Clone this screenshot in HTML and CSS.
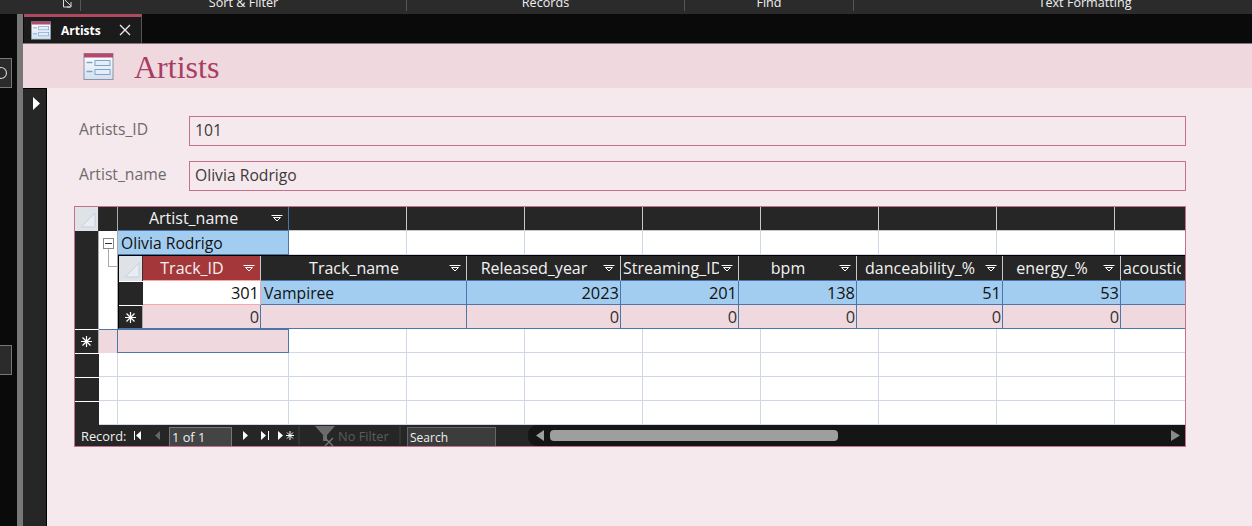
FILE: index.html
```html
<!DOCTYPE html>
<html>
<head>
    <title>Artists</title>
    <link rel="stylesheet" href="styles.css">
</head>
<body>
    <svg class="defs" width="0" height="0">
        <defs>
            <linearGradient id="form-fill" x1="0" y1="0" x2="0" y2="1">
                <stop offset="0" stop-color="#ffffff"/>
                <stop offset="1" stop-color="#d3e0f0"/>
            </linearGradient>
        </defs>
        <symbol id="drop" viewBox="0 0 12 8">
            <path d="M0.5 1.5H11.5M2.5 3.5H9.5L6 7Z" fill="none" stroke="#fff" stroke-width="1"/>
        </symbol>
        <symbol id="corner" viewBox="0 0 16 16">
            <path d="M1 15L15 1V15Z" fill="#e9edf3" stroke="#c6d0de" stroke-width="1"/>
        </symbol>
        <symbol id="star" viewBox="0 0 11 11">
            <path d="M5.5 0V11M0 5.5H11M1.5 1.5L9.5 9.5M9.5 1.5L1.5 9.5" stroke="#fff" stroke-width="1.2"/>
        </symbol>
        <symbol id="form-icon" viewBox="0 0 30 27">
            <rect x="0.5" y="0.5" width="29" height="26" fill="url(#form-fill)" stroke="#8b95a5"/>
            <rect x="0.5" y="0.5" width="29" height="4" fill="#b5486c"/>
            <path d="M3 9.5H9M3 18.5H9" stroke="#7fa3cc" stroke-width="1.4"/>
            <rect x="11.5" y="7.5" width="15" height="5" fill="#e4eef9" stroke="#7fa3cc"/>
            <rect x="11.5" y="16.5" width="15" height="5" fill="#e4eef9" stroke="#7fa3cc"/>
        </symbol>
    </svg>

    <div class="ribbon">
        <div class="ribbon-group launcher-group">
            <svg class="launcher" width="12" height="10" viewBox="0 0 12 10">
                <path d="M1 0H1.5V7H8M3 0L9 6M9 2V7H5" fill="none" stroke="#ddd" stroke-width="1"/>
            </svg>
        </div>
        <div class="ribbon-group sort-group"><span>Sort &amp; Filter</span></div>
        <div class="ribbon-group records-group"><span>Records</span></div>
        <div class="ribbon-group find-group"><span>Find</span></div>
        <div class="ribbon-group format-group"><span>Text Formatting</span></div>
    </div>

    <div class="workspace">
        <div class="nav-pane">
            <div class="nav-box nav-box-top">
                <svg width="11" height="16" viewBox="0 0 11 16">
                    <circle cx="1" cy="8" r="5.5" fill="none" stroke="#ccc" stroke-width="1.2"/>
                </svg>
            </div>
            <div class="nav-box nav-box-bottom"></div>
        </div>
        <div class="splitter"></div>

        <div class="document">
            <div class="tab-bar">
                <div class="tab">
                    <svg class="tab-icon" width="20" height="19"><use href="#form-icon"/></svg>
                    <span class="tab-name">Artists</span>
                    <svg class="tab-close" width="12" height="12" viewBox="0 0 12 12">
                        <path d="M1 1L11 11M11 1L1 11" stroke="#eee" stroke-width="1.3"/>
                    </svg>
                </div>
            </div>

            <div class="form-header">
                <svg class="form-header-icon" width="31" height="27"><use href="#form-icon"/></svg>
                <h1 class="form-title">Artists</h1>
            </div>

            <div class="form-body">
                <div class="record-selector">
                    <svg width="7" height="13" viewBox="0 0 7 13"><path d="M0 0L7 6.5L0 13Z" fill="#fff"/></svg>
                </div>

                <div class="form-content">
                    <div class="field">
                        <label class="field-label">Artists_ID</label>
                        <div class="field-value">101</div>
                    </div>
                    <div class="field">
                        <label class="field-label">Artist_name</label>
                        <div class="field-value">Olivia Rodrigo</div>
                    </div>

                    <div class="datasheet">
                        <div class="main-grid">
                            <div class="corner"><svg width="16" height="16"><use href="#corner"/></svg></div>
                            <div class="sel"></div>
                            <div class="head head-main">
                                <span class="head-label">Artist_name</span>
                                <svg class="drop" width="12" height="8"><use href="#drop"/></svg>
                            </div>
                            <div class="head"></div><div class="head"></div><div class="head"></div>
                            <div class="head"></div><div class="head"></div><div class="head"></div>
                            <div class="head"></div><div class="head"></div>

                            <div class="sel"></div>
                            <div class="expander">
                                <div class="minus"></div>
                                <div class="stem"></div>
                            </div>
                            <div class="cell cell-blue">Olivia Rodrigo</div>
                            <div class="empty"></div><div class="empty"></div><div class="empty"></div>
                            <div class="empty"></div><div class="empty"></div><div class="empty"></div>
                            <div class="empty"></div><div class="empty"></div>

                            <div class="sel sub-row"></div>
                            <div class="expander sub-row"><div class="elbow"></div></div>
                            <div class="sub-grid">
                                <div class="corner"><svg width="16" height="16"><use href="#corner"/></svg></div>
                                <div class="head head-active">
                                    <span class="head-label">Track_ID</span>
                                    <svg class="drop" width="12" height="8"><use href="#drop"/></svg>
                                </div>
                                <div class="head head-sub">
                                    <span class="head-label">Track_name</span>
                                    <svg class="drop" width="12" height="8"><use href="#drop"/></svg>
                                </div>
                                <div class="head head-sub">
                                    <span class="head-label">Released_year</span>
                                    <svg class="drop" width="12" height="8"><use href="#drop"/></svg>
                                </div>
                                <div class="head head-sub">
                                    <span class="head-label head-clip">Streaming_ID</span>
                                    <svg class="drop" width="12" height="8"><use href="#drop"/></svg>
                                </div>
                                <div class="head head-sub">
                                    <span class="head-label">bpm</span>
                                    <svg class="drop" width="12" height="8"><use href="#drop"/></svg>
                                </div>
                                <div class="head head-sub">
                                    <span class="head-label">danceability_%</span>
                                    <svg class="drop" width="12" height="8"><use href="#drop"/></svg>
                                </div>
                                <div class="head head-sub">
                                    <span class="head-label">energy_%</span>
                                    <svg class="drop" width="12" height="8"><use href="#drop"/></svg>
                                </div>
                                <div class="head head-sub">
                                    <span class="head-label head-clip">acousticness_%</span>
                                </div>

                                <div class="sel sel-line"></div>
                                <div class="cell cell-num cell-current">301</div>
                                <div class="cell cell-blue">Vampiree</div>
                                <div class="cell cell-blue cell-num">2023</div>
                                <div class="cell cell-blue cell-num">201</div>
                                <div class="cell cell-blue cell-num">138</div>
                                <div class="cell cell-blue cell-num">51</div>
                                <div class="cell cell-blue cell-num">53</div>
                                <div class="cell cell-blue"></div>

                                <div class="sel sel-new"><svg width="11" height="11"><use href="#star"/></svg></div>
                                <div class="cell cell-pink cell-num">0</div>
                                <div class="cell cell-pink"></div>
                                <div class="cell cell-pink cell-num">0</div>
                                <div class="cell cell-pink cell-num">0</div>
                                <div class="cell cell-pink cell-num">0</div>
                                <div class="cell cell-pink cell-num">0</div>
                                <div class="cell cell-pink cell-num">0</div>
                                <div class="cell cell-pink"></div>
                            </div>

                            <div class="sel sel-new"><svg width="11" height="11"><use href="#star"/></svg></div>
                            <div class="pink-gutter"></div>
                            <div class="cell cell-pink cell-new"></div>
                            <div class="empty"></div><div class="empty"></div><div class="empty"></div>
                            <div class="empty"></div><div class="empty"></div><div class="empty"></div>
                            <div class="empty"></div><div class="empty"></div>

                            <div class="sel sel-line"></div><div class="gutter"></div><div class="empty"></div>
                            <div class="empty"></div><div class="empty"></div><div class="empty"></div>
                            <div class="empty"></div><div class="empty"></div><div class="empty"></div>
                            <div class="empty"></div><div class="empty"></div>

                            <div class="sel sel-line"></div><div class="gutter"></div><div class="empty"></div>
                            <div class="empty"></div><div class="empty"></div><div class="empty"></div>
                            <div class="empty"></div><div class="empty"></div><div class="empty"></div>
                            <div class="empty"></div><div class="empty"></div>

                            <div class="sel sel-line"></div><div class="gutter"></div><div class="empty"></div>
                            <div class="empty"></div><div class="empty"></div><div class="empty"></div>
                            <div class="empty"></div><div class="empty"></div><div class="empty"></div>
                            <div class="empty"></div><div class="empty"></div>
                        </div>

                        <div class="record-nav">
                            <span class="nav-label">Record:</span>
                            <svg class="nav-first" width="10" height="9" viewBox="0 0 10 9"><path d="M0.5 0V9" stroke="#fff"/><path d="M7 0V9L2 4.5Z" fill="#fff"/></svg>
                            <svg class="nav-prev" width="6" height="9" viewBox="0 0 6 9"><path d="M5 0V9L0 4.5Z" fill="#666"/></svg>
                            <div class="nav-input">1 of 1</div>
                            <svg class="nav-next" width="6" height="9" viewBox="0 0 6 9"><path d="M0 0V9L5 4.5Z" fill="#fff"/></svg>
                            <svg class="nav-last" width="9" height="9" viewBox="0 0 9 9"><path d="M0 0V9L5 4.5Z" fill="#fff"/><path d="M7.5 0V9" stroke="#fff"/></svg>
                            <svg class="nav-new" width="17" height="9" viewBox="0 0 17 9"><path d="M0 0V9L5 4.5Z" fill="#fff"/><path d="M12 0V9M8 4.5H16M9 1.5L15 7.5M15 1.5L9 7.5" stroke="#fff"/></svg>
                            <div class="nav-sep"></div>
                            <svg class="nav-filter" width="21" height="20" viewBox="0 0 21 20">
                                <path d="M0 0H20L12 9V15H8V9Z" fill="#6b6b6b"/>
                                <path d="M10 12L18 20M18 12L10 20" stroke="#777" stroke-width="1.4"/>
                            </svg>
                            <span class="nav-nofilter">No Filter</span>
                            <div class="nav-sep nav-sep-second"></div>
                            <div class="nav-search">Search</div>
                            <div class="scrollbar">
                                <svg class="scroll-left" width="8" height="11" viewBox="0 0 8 11"><path d="M8 0V11L0 5.5Z" fill="#9e9e9e"/></svg>
                                <div class="scroll-thumb"></div>
                                <svg class="scroll-right" width="9" height="11" viewBox="0 0 9 11"><path d="M0 0V11L9 5.5Z" fill="#8a8a8a"/></svg>
                            </div>
                        </div>
                    </div>
                </div>
            </div>
        </div>
    </div>
</body>
</html>
```

FILE: styles.css
```css
* {
    box-sizing: border-box;
}

html, body {
    margin: 0;
    height: 526px;
    overflow: hidden;
}

body {
    font-family: "Open Sans", "Noto Sans", sans-serif;
    font-size: 15.7px;
    background-color: #0a0a0a;
    display: flex;
    flex-direction: column;
}

.defs {
    position: absolute;
}

/* ribbon, cut off at the top of the window */
.ribbon {
    height: 14px;
    flex: none;
    background-color: #2b2b2b;
    display: flex;
    overflow: hidden;
}

.ribbon-group {
    flex: none;
    height: 11px;
    border-right: 1px solid #555;
    color: #f0f0f0;
    font-size: 12.6px;
    line-height: 11px;
    display: flex;
    align-items: flex-end;
    justify-content: center;
}

.ribbon-group span {
    position: relative;
    top: -3px;
}

.launcher-group {
    width: 81px;
    padding-left: 56px;
    align-items: flex-start;
}

.sort-group {
    width: 326px;
}

.records-group {
    width: 278px;
}

.find-group {
    width: 169px;
}

.format-group {
    width: 462px;
    border-right: none;
}

.workspace {
    flex: 1;
    display: flex;
    min-height: 0;
}

.nav-pane {
    width: 17px;
    flex: none;
}

.nav-box {
    width: 12px;
    height: 30px;
    border: 1px solid #777;
    border-left: none;
    background-color: #2b2b2b;
    display: flex;
    align-items: center;
}

.nav-box-top {
    margin-top: 44px;
}

.nav-box-bottom {
    margin-top: 257px;
}

.splitter {
    width: 6px;
    flex: none;
    background-color: #777;
}

.document {
    flex: 1;
    display: flex;
    flex-direction: column;
    min-width: 0;
}

.tab-bar {
    height: 30px;
    flex: none;
    background-color: #0a0a0a;
    border-bottom: 1px solid #7a7a7a;
}

.tab {
    width: 118px;
    height: 29px;
    margin-left: 1px;
    background-color: #1b1b1b;
    border-top: 3px solid #b0485f;
    border-right: 1px solid #555;
    display: flex;
    align-items: center;
    padding-left: 7px;
}

.tab-icon {
    flex: none;
}

.tab-name {
    margin-left: 10px;
    color: #fff;
    font-size: 12px;
    font-weight: 700;
}

.tab-close {
    margin-left: 18px;
}

.form-header {
    height: 44px;
    flex: none;
    background-color: #efd9df;
    display: flex;
    align-items: center;
    padding-left: 60px;
}

.form-title {
    margin: 0 0 0 20px;
    padding-top: 3px;
    font-family: "Liberation Serif", serif;
    font-weight: 400;
    font-size: 32px;
    color: #a83d62;
}

.form-body {
    flex: 1;
    display: flex;
    background-color: #f6e9ed;
    min-height: 0;
}

.record-selector {
    width: 24px;
    flex: none;
    background-color: #262626;
    border-top: 1px solid #000;
    border-right: 1px solid #000;
    padding: 4px 0 0 10px;
}

.form-content {
    flex: 1;
    min-width: 0;
    padding: 28px 66px 0 27px;
}

.field {
    display: flex;
    align-items: center;
    height: 30px;
    margin-bottom: 15px;
}

.field-label {
    width: 115px;
    padding-left: 5px;
    padding-bottom: 5px;
    color: #6f6a6c;
}

.field-value {
    flex: 1;
    height: 30px;
    line-height: 27px;
    padding-left: 5px;
    border: 1px solid #c4708f;
    color: #3a3a3a;
}

/* datasheet */
.datasheet {
    border: 1px solid #c4708f;
    height: 241px;
    background-color: #fff;
    display: flex;
    flex-direction: column;
    overflow: hidden;
}

.main-grid {
    flex: 1;
    display: grid;
    grid-template-columns: 24px 19px 171px repeat(7, 118px) 71px;
    grid-template-rows: 24px 24px 74px 24px 24px 24px 24px;
    overflow: hidden;
}

.sub-grid {
    grid-column: 3 / -1;
    display: grid;
    grid-template-columns: 24px 118px 206px 154px 118px 118px 146px 118px 66px;
    grid-template-rows: 25px 24px 24px;
    border-top: 1px solid #000;
    border-left: 1px solid #000;
    border-bottom: 1px solid #4a76a8;
    overflow: hidden;
    background-color: #fff;
}

.corner {
    background-color: #dfe3e8;
    border-right: 1px solid #333;
    display: flex;
    align-items: flex-end;
    justify-content: flex-end;
    padding: 0 2px 3px 0;
}

.sel {
    background-color: #262626;
    border-right: 1px solid #aaa;
}

.sel-line {
    border-top: 1px solid #fff;
    border-right: none;
}

.sel-new {
    background-color: #262626;
    border-top: 1px solid #fff;
    display: flex;
    align-items: center;
    justify-content: center;
}

.head {
    background-color: #262626;
    border-right: 1px solid #c8c8c8;
    border-bottom: 1px solid #c8c8c8;
    color: #f2f2f2;
    font-size: 16px;
    display: flex;
    align-items: center;
    padding-right: 5px;
    padding-bottom: 1px;
    min-width: 0;
    overflow: hidden;
}

.head-main {
    border-right-color: #4a76a8;
    border-bottom-color: #4a76a8;
}

.head-sub {
    border-bottom-color: #4a76a8;
}

.head-active {
    background-color: #a4373a;
    border-bottom-color: #f5a9a9;
}

.head-label {
    flex: 1;
    text-align: center;
    white-space: nowrap;
    overflow: hidden;
}

.head-clip {
    text-align: left;
    padding-left: 2px;
}

.drop {
    flex: none;
    margin-left: 2px;
}

.expander {
    background-color: #fff;
    border-right: 1px solid #aaa;
    padding: 7px 0 0 4px;
}

.minus {
    width: 11px;
    height: 11px;
    border: 1px solid #888;
    background: linear-gradient(#333, #333) center / 7px 1px no-repeat;
}

.stem {
    width: 1px;
    height: 6px;
    margin-left: 5px;
    background-color: #aaa;
}

.expander.sub-row {
    padding: 0 0 0 9px;
}

.elbow {
    width: 10px;
    height: 12px;
    border-left: 1px solid #aaa;
    border-bottom: 1px solid #aaa;
}

.gutter {
    background-color: #fff;
    border-right: 1px solid #d0d8e8;
    border-bottom: 1px solid #d0d8e8;
}

.pink-gutter {
    background-color: #efd9df;
    border-top: 1px solid #4a76a8;
    border-right: 1px solid #4a76a8;
}

.cell {
    border-right: 1px solid #4a76a8;
    border-bottom: 1px solid #4a76a8;
    color: #111;
    line-height: 24px;
    padding: 0 1px 0 3px;
    white-space: nowrap;
    overflow: hidden;
}

.cell-num {
    font-size: 16.4px;
    text-align: right;
}

.cell-blue {
    background-color: #a3cdf0;
}

.cell-pink {
    background-color: #efd9df;
    color: #333;
}

.cell-current {
    background-color: #fff;
    border-bottom: 1px solid #f5a9a9;
    border-right: 1px solid #f5a9a9;
}

.cell-new {
    border-top: 1px solid #4a76a8;
}

.empty {
    background-color: #fff;
    border-right: 1px solid #d0d8e8;
    border-bottom: 1px solid #d0d8e8;
}

/* record navigation bar */
.record-nav {
    height: 21px;
    flex: none;
    background-color: #262626;
    color: #f0f0f0;
    font-size: 12.8px;
    display: flex;
    align-items: center;
    padding-left: 6px;
}

.nav-label {
    width: 53px;
    padding-top: 1px;
}

.nav-first {
    flex: none;
}

.nav-prev {
    flex: none;
    margin-left: 11px;
}

.nav-input {
    width: 63px;
    height: 19px;
    margin-top: 2px;
    margin-left: 8px;
    padding-left: 2px;
    line-height: 19px;
    background-color: #444;
    border-top: 1px solid #777;
    border-left: 1px solid #777;
    border-right: 1px solid #777;
}

.nav-next {
    flex: none;
    margin-left: 11px;
}

.nav-last {
    flex: none;
    margin-left: 12px;
}

.nav-new {
    flex: none;
    margin-left: 8px;
}

.nav-sep {
    width: 2px;
    height: 19px;
    margin-left: 3px;
    background-color: #333;
}

.nav-filter {
    flex: none;
    margin-left: 15px;
}

.nav-nofilter {
    width: 57px;
    margin-left: 2px;
    padding-top: 1px;
    color: #5c5c5c;
}

.nav-sep-second {
    margin-left: 4px;
}

.nav-search {
    width: 89px;
    height: 19px;
    margin-top: 2px;
    margin-left: 6px;
    padding-left: 2px;
    font-size: 12px;
    line-height: 19px;
    background-color: #3c3c3c;
    border: 1px solid #666;
    border-bottom: none;
}

.scrollbar {
    flex: 1;
    height: 21px;
    margin-left: 32px;
    background-color: #151515;
    border-radius: 9px 0 0 9px;
    display: flex;
    align-items: center;
    padding: 0 5px 0 8px;
}

.scroll-thumb {
    width: 288px;
    height: 11px;
    margin-left: 6px;
    border-radius: 4px;
    background-color: #9e9e9e;
}

.scroll-right {
    margin-left: auto;
}
```
